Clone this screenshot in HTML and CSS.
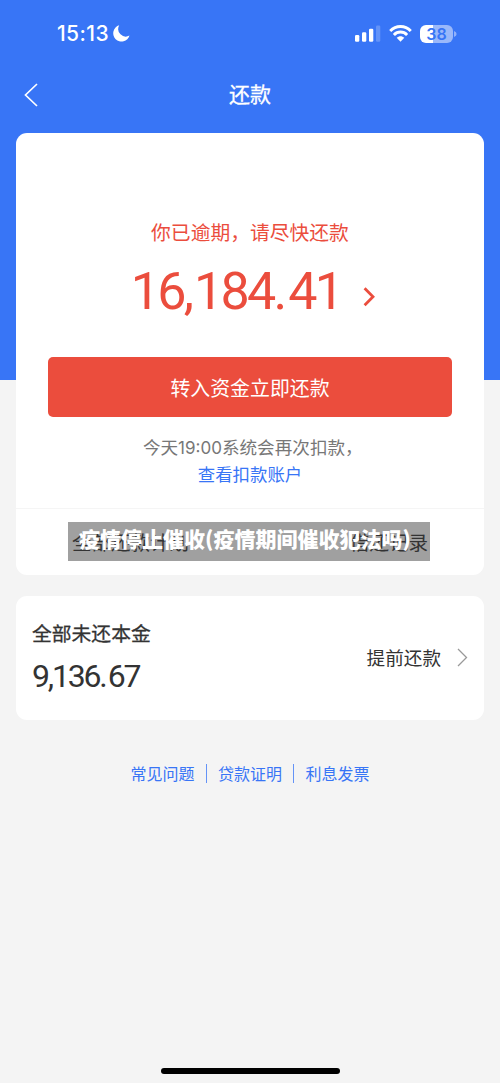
FILE: index.html
```html
<!DOCTYPE html>
<html lang="zh-CN">
<head>
<meta charset="utf-8">
<title>还款</title>
<link rel="stylesheet" href="styles.css">
</head>
<body>
<div class="screen">
  <header class="top">
    <div class="status">
      <span class="clock">15:13</span>
      <svg class="moon" width="17" height="17" viewBox="0 0 17 17"><path fill="#fff" d="M6.2.3A8.3 8.3 0 1 0 16.5 10.6 7.6 7.6 0 0 1 6.2.3Z"/></svg>
      <svg class="signal" width="26" height="17" viewBox="0 0 26 17" fill="#fff"><rect x="0" y="10" width="4.3" height="6.7" rx="1.2"/><rect x="7" y="7.2" width="4.3" height="9.5" rx="1.2"/><rect x="14" y="3.8" width="4.3" height="12.9" rx="1.2"/><rect x="21" y=".5" width="4.3" height="16.2" rx="1.2" opacity=".22"/></svg>
      <svg class="wifi" width="23" height="17" viewBox="0 0 23 17"><g fill="none" stroke="#fff" stroke-width="2.9"><path d="M1.2 6.1C7-.1 16-.1 21.8 6.1"/><path d="M4.9 9.9C8.6 6.1 14.4 6.1 18.1 9.9"/></g><path fill="#fff" d="M7.7 12.8c2.2-2.1 5.4-2.1 7.6 0L11.5 16.7Z"/></svg>
      <div class="battery"><span>38</span></div>
      <svg class="cap" width="3" height="6" viewBox="0 0 3 6"><path fill="#91b1fa" d="M0 0Q2.6 1 2.6 3T0 6Z"/></svg>
    </div>
    <nav class="nav">
      <svg class="back" width="14" height="24" viewBox="0 0 14 24"><path d="M13 1 1.5 12 13 23" fill="none" stroke="#fff" stroke-width="1.7"/></svg>
      <h1 class="title">还款</h1>
    </nav>
  </header>
  <main class="content">
    <section class="card due">
      <p class="notice">你已逾期，请尽快还款</p>
      <div class="amount"><span>16<b>,</b>184<b class="dot">.</b>41</span><svg width="12" height="20" viewBox="0 0 12 20"><path d="M1.6 1.2 10 9.7 1.6 18.2" fill="none" stroke="#eb4d3d" stroke-width="2.8"/></svg></div>
      <button class="pay">转入资金立即还款</button>
      <p class="hint">今天<span class="time">19:00</span>系统会再次扣款<span class="comma">，</span></p>
      <a class="account">查看扣款账户</a>
      <div class="records"><span>全部还款计划</span><span>借还记录</span>
        <div class="caption">疫情停止催收(疫情期间催收犯法吗)</div>
      </div>
    </section>
    <section class="card principal">
      <div><h2 class="label">全部未还本金</h2><p class="balance">9,136<b>.</b>67</p></div>
      <div class="early"><span>提前还款</span><svg width="11" height="19" viewBox="0 0 11 19"><path d="M1 1 9.5 9.5 1 18" fill="none" stroke="#999" stroke-width="1.3"/></svg></div>
    </section>
    <footer class="links"><a>常见问题</a><i></i><a>贷款证明</a><i></i><a>利息发票</a></footer>
  </main>
  <div class="home"></div>
</div>
</body>
</html>
```
FILE: styles.css
```css
* { box-sizing: border-box; }
body { margin: 0; font-family: "Noto Sans CJK SC", sans-serif; }
h1, h2, p { margin: 0; font-weight: 400; }
b { font-weight: 400; letter-spacing: 0; }
svg { display: block; flex: none; }
.screen { height: 1083px; background: linear-gradient(#3875f6 380px, #f4f4f4 380px); display: flex; flex-direction: column; overflow: hidden; }
.top { height: 133px; flex: none; color: #fff; }
.status { height: 67px; padding: 0 47px 0 57px; display: flex; align-items: center; }
.clock { font: 500 21px/24px Inter, sans-serif; letter-spacing: .4px; width: 56px; white-space: nowrap; padding-top: 1px; }
.signal { margin-left: auto; }
.wifi { margin: 0 8px 0 8px; }
.battery { width: 33px; height: 18px; border-radius: 6px; background: linear-gradient(90deg, #fff 13px, #9ab8fa 13px); color: #3875f6; font: 600 16px/18px Inter, sans-serif; text-align: center; }
.cap { margin: 0 -4px 0 1px; }
.nav { display: grid; grid-template-columns: 40px 1fr 40px; align-items: center; height: 56px; padding: 0 24px; }
.title { font-size: 21px; line-height: 30px; padding-bottom: 4px; text-align: center; -webkit-text-stroke: .3px #fff; }
.content { padding: 0 16px; }
.card { background: #fff; border-radius: 11px; }
.due { height: 442px; padding-top: 84px; display: flex; flex-direction: column; align-items: center; }
.notice { font-size: 19.8px; line-height: 30px; color: #eb4d3d; white-space: nowrap; }
.amount { display: flex; align-items: center; gap: 22px; height: 74px; margin-top: 8px; padding-left: 6px; color: #eb4d3d; font: 400 52px/74px Roboto, sans-serif; letter-spacing: -2.7px; }
.amount .dot { letter-spacing: 1px; }
.amount svg { margin-top: 9px; }
.pay { width: 404px; height: 60px; margin-top: 28px; border: 0; border-radius: 5px; background: #eb4d3d; color: #fff; font: 400 19.9px/60px "Noto Sans CJK SC", sans-serif; }
.hint { margin-top: 17px; padding-right: 6px; font-size: 17.6px; line-height: 25px; color: #777; white-space: nowrap; }
.time { font-family: Inter, sans-serif; font-size: 17px; }
.comma { display: inline-block; width: 6px; }
.account { font-size: 17.4px; line-height: 26px; color: #3875f6; }
.records { position: relative; z-index: 0; width: 100%; height: 67px; margin-top: auto; padding: 0 56px 1px; border-top: 1px solid #f5f5f5; display: flex; justify-content: space-between; align-items: center; font-size: 19.5px; color: #333; }
.records span { line-height: 28px; }
.caption { position: absolute; left: 52px; top: 13px; width: 362px; height: 39px; padding-left: 11px; color: #fff; font-size: 21px; font-weight: 900; line-height: 32px; white-space: nowrap; }
.records::before { content: ""; position: absolute; z-index: -1; left: 52px; top: 13px; width: 362px; height: 39px; background: #a0a0a0; }
.principal { height: 124px; margin-top: 21px; padding: 22px 16px 20px; display: flex; justify-content: space-between; color: #333; }
.label { font-size: 19.8px; line-height: 30px; -webkit-text-stroke: .3px #333; }
.balance { font: 400 32px/40px Roboto, sans-serif; letter-spacing: -2.2px; margin-top: 8px; }
.early { display: flex; align-items: center; gap: 16px; font-size: 18.6px; margin-top: -4px; }
.early span { padding-bottom: 1px; }
.links { display: flex; align-items: center; justify-content: center; gap: 11px; margin-top: 39px; font-size: 16px; line-height: 28px; color: #3875f6; }
.links i { width: 1.4px; height: 19px; background: #6493f7; }
.home { width: 179px; height: 6px; border-radius: 3px; background: #000; margin: auto auto 9px; }
```
